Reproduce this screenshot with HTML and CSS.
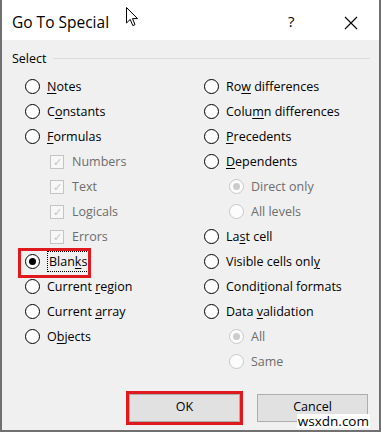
FILE: index.html
```html
<!DOCTYPE html>
<html lang="en">
  <head>
    <meta charset="UTF-8" />
    <meta name="viewport" content="width=device-width, initial-scale=1.0" />
    <title>Go To Special</title>
    <link rel="stylesheet" href="styles.css">
  </head>
  <body>
    <div class="dialog">
      <div class="titlebar">
        <span class="title">Go To Special</span>
        <svg class="cursor" width="13" height="20" viewBox="0 0 13 20">
          <path d="M0.5 0.5 L0.5 16 L4.2 12.4 L6.8 18.6 L9 17.6 L6.5 11.6 L11.5 11.6 Z" fill="#fff" stroke="#000" stroke-width="1" stroke-linejoin="round" />
        </svg>
        <span class="help">?</span>
        <svg class="close" width="14" height="14" viewBox="0 0 14 14">
          <path d="M1 1 L13 13 M13 1 L1 13" stroke="#000" stroke-width="1.1" />
        </svg>
      </div>
      <div class="content">
        <div class="group-label"><span>Select</span><div class="rule"></div></div>
        <div class="columns">
          <div class="col">
            <label class="opt"><span class="radio"></span><span><u>N</u>otes</span></label>
            <label class="opt"><span class="radio"></span><span>C<u>o</u>nstants</span></label>
            <label class="opt"><span class="radio"></span><span><u>F</u>ormulas</span></label>
            <label class="opt sub off"><span class="check">&#10003;</span><span>Numbers</span></label>
            <label class="opt sub off"><span class="check">&#10003;</span><span>Text</span></label>
            <label class="opt sub off"><span class="check">&#10003;</span><span>Logicals</span></label>
            <label class="opt sub off"><span class="check">&#10003;</span><span>Errors</span></label>
            <label class="opt marked"><span class="radio on"></span><span class="focus">Blan<u>k</u>s</span></label>
            <label class="opt"><span class="radio"></span><span>Current <u>r</u>egion</span></label>
            <label class="opt"><span class="radio"></span><span>Current <u>a</u>rray</span></label>
            <label class="opt"><span class="radio"></span><span>O<u>b</u>jects</span></label>
          </div>
          <div class="col">
            <label class="opt"><span class="radio"></span><span>Ro<u>w</u> differences</span></label>
            <label class="opt"><span class="radio"></span><span>Colu<u>m</u>n differences</span></label>
            <label class="opt"><span class="radio"></span><span><u>P</u>recedents</span></label>
            <label class="opt"><span class="radio"></span><span><u>D</u>ependents</span></label>
            <label class="opt sub off"><span class="radio on"></span><span>Direct only</span></label>
            <label class="opt sub off"><span class="radio"></span><span>All levels</span></label>
            <label class="opt"><span class="radio"></span><span>La<u>s</u>t cell</span></label>
            <label class="opt"><span class="radio"></span><span>Visible cells onl<u>y</u></span></label>
            <label class="opt"><span class="radio"></span><span>Condi<u>t</u>ional formats</span></label>
            <label class="opt"><span class="radio"></span><span>Data <u>v</u>alidation</span></label>
            <label class="opt sub off"><span class="radio on"></span><span>All</span></label>
            <label class="opt sub off"><span class="radio"></span><span>Same</span></label>
          </div>
        </div>
        <div class="buttons">
          <button class="btn marked-btn">OK</button>
          <button class="btn">Cancel</button>
        </div>
      </div>
      <span class="watermark">wsxdn.com</span>
    </div>
  </body>
</html>
```

FILE: styles.css
```css
body {
  margin: 0;
  padding: 0;
  font-family: "Open Sans", "Noto Sans", sans-serif;
  color: #000;
}
.dialog {
  position: relative;
  width: 381px;
  height: 432px;
  box-sizing: border-box;
  border: 2px solid #707070;
  border-top: none;
  background: #f0f0f0;
  display: flex;
  flex-direction: column;
}
.titlebar {
  position: relative;
  height: 40px;
  background: #fff;
  display: flex;
  align-items: center;
  padding-left: 10px;
}
.title {
  font-size: 15.5px;
  margin-top: 3px;
}
.cursor {
  position: absolute;
  left: 124px;
  top: 7px;
}
.help {
  position: absolute;
  left: 286px;
  top: 11px;
  font-size: 15px;
}
.close {
  position: absolute;
  left: 342px;
  top: 16px;
}
.content {
  flex: 1;
  padding: 9px 0 0 0;
}
.group-label {
  display: flex;
  align-items: center;
  height: 18px;
  padding-left: 10px;
  font-size: 12.5px;
}
.rule {
  flex: 1;
  height: 1px;
  background: #dcdcdc;
  margin: 0 9px 0 6px;
}
.columns {
  display: flex;
  margin-top: 7px;
}
.col {
  display: flex;
  flex-direction: column;
}
.col:first-child {
  width: 179px;
  padding-left: 23px;
}
.opt {
  height: 25px;
  display: flex;
  align-items: center;
  font-size: 12.5px;
  white-space: nowrap;
}
.opt u {
  text-decoration-thickness: 1px;
  text-underline-offset: 2px;
}
.radio {
  position: relative;
  width: 13px;
  height: 13px;
  border: 1.3px solid #000;
  border-radius: 50%;
  background: #fff;
  margin-right: 7px;
  flex-shrink: 0;
}
.radio.on::after {
  content: "";
  position: absolute;
  left: 3px;
  top: 3px;
  width: 7px;
  height: 7px;
  border-radius: 50%;
  background: #000;
}
.off {
  color: #6d6d6d;
}
.off .radio {
  border-color: #c8c8c8;
  background: #fcfcfc;
}
.off .radio.on::after {
  background: #cccccc;
}
.sub {
  padding-left: 25px;
}
.check {
  width: 12px;
  height: 12px;
  border: 1px solid #c4c4c4;
  background: #f7f7f7;
  color: #c4c4c4;
  font-size: 11px;
  line-height: 12px;
  text-align: center;
  margin-right: 8px;
  flex-shrink: 0;
}
.marked {
  position: relative;
}
.marked::before {
  content: "";
  position: absolute;
  left: -7px;
  top: -1px;
  width: 67px;
  height: 24px;
  border: 3px solid #e0191e;
}
.focus {
  border: 1px dotted #000;
  padding: 0 1px;
  line-height: 19px;
}
.buttons {
  display: flex;
  justify-content: flex-end;
  gap: 17px;
  padding: 20px 11px 0 0;
}
.btn {
  width: 111px;
  height: 28px;
  background: #e1e1e1;
  border: 1px solid #adadad;
  font-family: inherit;
  font-size: 12.5px;
  color: #000;
  padding: 0 0 4px 0;
}
.marked-btn {
  outline: 3px solid #e0191e;
  outline-offset: 0;
  box-shadow: 2px 2px 2px rgba(0, 0, 0, 0.25);
}
.watermark {
  position: absolute;
  right: 9px;
  bottom: 2px;
  background: #fff;
  font-size: 13.5px;
  line-height: 14px;
  padding: 0 1px;
}
```
